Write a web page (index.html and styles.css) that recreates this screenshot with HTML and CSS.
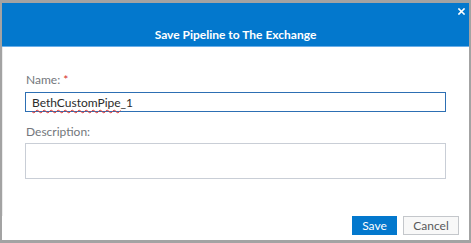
FILE: index.html
```html
<!DOCTYPE html>
<html lang="en">
<head>
    <meta charset="UTF-8">
    <meta name="viewport" content="width=device-width, initial-scale=1.0">
    <title>Save Pipeline to The Exchange</title>
    <link rel="stylesheet" href="styles.css">
</head>
<body>
    <div class="dialog">
        <div class="dialog-header">
            <h2>Save Pipeline to The Exchange</h2>
            <svg class="close" width="7" height="7" viewBox="0 0 7 7">
                <path d="M1 1L6 6M6 1L1 6" stroke="#fff" stroke-width="1.6" stroke-linecap="square"/>
            </svg>
        </div>
        <div class="dialog-body">
            <label class="field-label">Name: <span class="required">*</span></label>
            <div class="text-input focused"><span class="misspelled">BethCustomPipe</span>_1</div>
            <label class="field-label">Description:</label>
            <div class="text-area"></div>
        </div>
        <div class="dialog-footer">
            <button class="btn btn-primary">Save</button>
            <button class="btn btn-default">Cancel</button>
        </div>
    </div>
</body>
</html>
```

FILE: styles.css
```css
body {
    font-family: Lato, "Open Sans", Arial, sans-serif;
    margin: 0;
    padding: 0;
    background-color: #a3a3a3;
}

.dialog {
    margin: 3px 2px;
    height: 237px;
    background-color: #fff;
    display: flex;
    flex-direction: column;
}

.dialog-header {
    position: relative;
    height: 43px;
    background-color: #0378cd; /* Azul */
    border-bottom: 1px solid #6aaee8;
    box-sizing: content-box;
}

.dialog-header h2 {
    margin: 0;
    padding-top: 24px;
    color: #fff;
    font-size: 12px;
    font-weight: bold;
    line-height: 16px;
    text-align: center;
}

.close {
    position: absolute;
    top: 5px;
    right: 4px;
}

.dialog-body {
    flex: 1;
    padding: 25px 23px 0 22px;
    border-left: 1px solid #ececec;
}

.field-label {
    display: block;
    color: #73777c;
    font-size: 12px;
    line-height: 16px;
    margin-left: 1px;
}

.required {
    color: #d6302b;
}

.text-input {
    margin-top: 4px;
    height: 18px;
    border: 1px solid #a9b2bd;
    padding: 0 6px;
    color: #2b2b2b;
    font-size: 12px;
    line-height: 19px;
}

.text-input.focused {
    border-color: #2d6fb3;
}

.misspelled {
    text-decoration: underline wavy #e0302b;
    text-decoration-thickness: 1px;
    text-underline-offset: 2px;
}

.text-area {
    margin-top: 3px;
    height: 34px;
    border: 1px solid #c9ced6;
    margin-bottom: 12px;
}

.field-label + .text-input + .field-label {
    margin-top: 12px;
}

.dialog-footer {
    display: flex;
    justify-content: flex-end;
    gap: 6px;
    padding: 0 10px 5px 0;
}

.btn {
    font-family: Lato, "Open Sans", Arial, sans-serif;
    font-size: 12px;
    height: 19px;
    padding: 0;
    border-radius: 0;
    cursor: pointer;
}

.btn-primary {
    width: 45px;
    background-color: #0378cd;
    border: 1px solid #0378cd;
    color: #fff;
}

.btn-default {
    width: 56px;
    background-color: #f8f8f8;
    border: 1px solid #c4c7cb;
    color: #58595b;
}
```
